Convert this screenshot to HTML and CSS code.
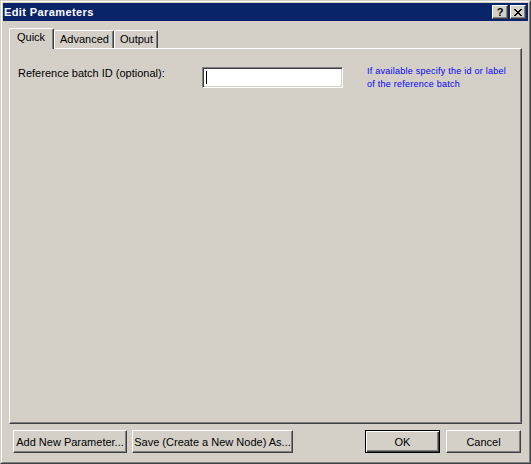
FILE: index.html
```html
<!DOCTYPE html>
<html>
<head>
<meta charset="utf-8">
<title>Edit Parameters</title>
<link rel="stylesheet" href="styles.css">
</head>
<body>
<div class="window">
  <div class="frame">
    <div class="titlebar">
      <span class="title">Edit Parameters</span>
      <div class="caption-buttons">
        <span class="cap-btn help">?</span>
        <span class="cap-btn close">
          <svg width="8" height="7" viewBox="0 0 8 7" shape-rendering="crispEdges">
            <path d="M0 0h2v1h-2zM6 0h2v1h-2zM1 1h2v1h-2zM5 1h2v1h-2zM2 2h4v1h-4zM3 3h2v1h-2zM2 4h4v1h-4zM1 5h2v1h-2zM5 5h2v1h-2zM0 6h2v1h-2zM6 6h2v1h-2z" fill="#000"/>
          </svg>
        </span>
      </div>
    </div>
    <div class="content">
      <div class="tabs">
        <div class="tab selected">Quick</div>
        <div class="tab">Advanced</div>
        <div class="tab">Output</div>
      </div>
      <div class="panel">
        <div class="row">
          <label class="label">Reference batch ID (optional):</label>
          <div class="input"><span class="caret"></span></div>
          <div class="help-text">If available specify the id or label<br>of the reference batch</div>
        </div>
      </div>
      <div class="buttons">
        <button class="btn btn-add">Add New Parameter...</button>
        <button class="btn btn-save">Save (Create a New Node) As...</button>
        <div class="spacer"></div>
        <button class="btn btn-ok default">OK</button>
        <button class="btn btn-cancel">Cancel</button>
      </div>
    </div>
  </div>
</div>
</body>
</html>
```
FILE: styles.css
```css
html, body {
  margin: 0;
  padding: 0;
  background: #D4D0C8;
}
body {
  font-family: "Liberation Sans", Arial, sans-serif;
  font-size: 11px;
  color: #000;
}
.window {
  width: 531px;
  height: 464px;
  box-sizing: border-box;
  border: 1px solid;
  border-color: #D4D0C8 #404040 #404040 #D4D0C8;
  background: #D4D0C8;
}
.frame {
  height: 100%;
  box-sizing: border-box;
  border: 1px solid;
  border-color: #fff #808080 #808080 #fff;
  padding: 1px;
  display: flex;
  flex-direction: column;
}
.titlebar {
  height: 18px;
  background: #0A246A;
  display: flex;
  align-items: center;
  justify-content: space-between;
  padding: 0 2px 0 1px;
}
.title {
  color: #fff;
  font-weight: bold;
  font-size: 11px;
  letter-spacing: 0.4px;
}
.caption-buttons {
  display: flex;
}
.cap-btn {
  width: 16px;
  height: 14px;
  box-sizing: border-box;
  background: #D4D0C8;
  border: 1px solid;
  border-color: #fff #404040 #404040 #fff;
  box-shadow: inset -1px -1px #808080;
  display: flex;
  align-items: center;
  justify-content: center;
}
.cap-btn.help {
  font-weight: bold;
  font-size: 11px;
  line-height: 1;
  margin-right: 2px;
}
.content {
  flex: 1;
  display: flex;
  flex-direction: column;
  padding: 7px 6px 0 6px;
}
.tabs {
  display: flex;
  align-items: flex-end;
  height: 20px;
  position: relative;
  z-index: 1;
}
.tab {
  height: 18px;
  box-sizing: border-box;
  border: 1px solid;
  border-bottom: none;
  border-color: #fff #404040 transparent #fff;
  box-shadow: inset -1px 0 #808080;
  border-radius: 2px 2px 0 0;
  padding: 2px 5px 0 5px;
  text-align: center;
  background: #D4D0C8;
}
.tab.selected {
  height: 21px;
  margin-bottom: -1px;
  padding: 2px 8px 0 7px;
  width: 45px;
}
.tab:nth-child(2) { width: 60px; }
.tab:nth-child(3) { width: 44px; }
.panel {
  height: 376px;
  box-sizing: border-box;
  border: 1px solid;
  border-color: #fff #404040 #404040 #fff;
  box-shadow: inset -1px -1px #808080;
  padding: 18px 0 0 8px;
}
.row {
  display: flex;
  align-items: flex-start;
}
.label {
  width: 184px;
  padding-top: 0;
}
.input {
  width: 141px;
  height: 21px;
  box-sizing: border-box;
  background: #fff;
  border: 1px solid;
  border-color: #808080 #fff #fff #808080;
  box-shadow: inset 1px 1px #404040, inset -1px -1px #D4D0C8;
  padding: 3px 0 0 3px;
}
.caret {
  display: block;
  width: 1px;
  height: 13px;
  background: #000;
}
.help-text {
  margin-left: 24px;
  margin-top: -2px;
  color: #0000FF;
  font-size: 9px;
  line-height: 13px;
  letter-spacing: 0.25px;
}
.buttons {
  display: flex;
  margin-top: 6px;
  height: 23px;
  padding: 0 0 0 4px;
  gap: 5px;
}
.spacer { flex: 1; }
.btn {
  font-family: "Liberation Sans", Arial, sans-serif;
  font-size: 11px;
  color: #000;
  background: #D4D0C8;
  height: 23px;
  box-sizing: border-box;
  border: 1px solid;
  border-color: #fff #404040 #404040 #fff;
  box-shadow: inset -1px -1px #808080;
  border-radius: 0;
  padding: 0;
  margin: 0;
}
.btn-add { width: 114px; }
.btn-save { width: 161px; }
.btn-ok { width: 75px; margin-right: 1px; }
.btn-cancel { width: 75px; margin-right: 1px; }
.btn.default {
  border-color: #000;
  box-shadow: inset 1px 1px #fff, inset -1px -1px #404040, inset -2px -2px #808080;
}
```
